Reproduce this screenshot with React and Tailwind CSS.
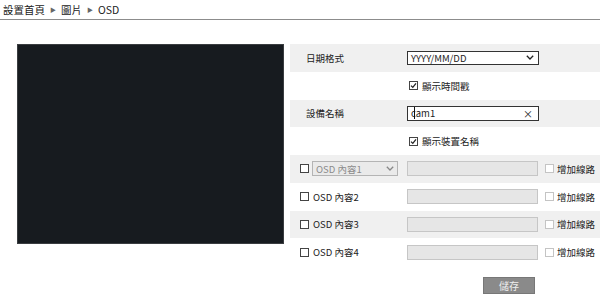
import React from "react";

const font = { fontFamily: '"Noto Sans CJK TC", "Noto Sans", sans-serif' };

const Box = ({ checked, muted }) => (
  <span
    className={`inline-flex items-center justify-center w-[9px] h-[9px] border bg-white shrink-0 ${
      muted ? "border-[#c4c4c4]" : "border-[#444]"
    }`}
  >
    {checked && (
      <svg width="7" height="7" viewBox="0 0 7 7">
        <path d="M1 3.6 L2.8 5.4 L6 1.4" fill="none" stroke="#222" strokeWidth="1.3" />
      </svg>
    )}
  </span>
);

const Chevron = ({ color }) => (
  <svg width="8" height="5" viewBox="0 0 8 5">
    <path d="M0.8 0.8 L4 4 L7.2 0.8" fill="none" stroke={color} strokeWidth="1.3" />
  </svg>
);

const Row = ({ gray, children }) => (
  <div className={`h-[27.75px] flex items-center text-[9.5px] text-[#222] ${gray ? "bg-[#f0f0f0]" : ""}`}>
    {children}
  </div>
);

const OsdRow = ({ gray, n, first }) => (
  <Row gray={gray}>
    <div className="w-[117px] pl-[10px] flex items-center">
      <Box />
      {first ? (
        <div className="ml-[3px] w-[86px] h-[15px] border border-[#b4b4b4] bg-[#eaeaea] flex items-center justify-between px-[3px] text-[#8a8a8a]">
          <span>OSD 內容1</span>
          <Chevron color="#888" />
        </div>
      ) : (
        <span className="ml-[4px]">OSD 內容{n}</span>
      )}
    </div>
    <div className="w-[131px] h-[15px] border border-[#c6c6c6] bg-[#e6e6e6]" />
    <div className="ml-[7px] flex items-center">
      <Box muted />
      <span className="ml-[3px]">增加線路</span>
    </div>
  </Row>
);

export default function App() {
  return (
    <div className="w-[600px] h-[308px] bg-white overflow-hidden" style={font}>
      <div className="h-[20px] border-b border-[#8c8c8c] pl-[3px] flex items-center text-[10.5px] text-[#222]">
        <span>設置首頁</span>
        <span className="mx-[5px] text-[6px] text-[#666]">▶</span>
        <span>圖片</span>
        <span className="mx-[5px] text-[6px] text-[#666]">▶</span>
        <span>OSD</span>
      </div>
      <div className="flex pt-[24px] pl-[17px]">
        <div className="w-[267px] h-[200px] bg-[#171b1f] border border-[#3a3d40] shrink-0" />
        <div className="ml-[6px] flex-1">
          <Row gray>
            <div className="w-[117px] pl-[16px]">日期格式</div>
            <div className="w-[132px] h-[14px] border border-[#333] bg-white flex items-center justify-between pl-[3px] pr-[4px]">
              <span>YYYY/MM/DD</span>
              <Chevron color="#222" />
            </div>
          </Row>
          <Row>
            <div className="w-[119px]" />
            <Box checked />
            <span className="ml-[4px]">顯示時間戳</span>
          </Row>
          <Row gray>
            <div className="w-[117px] pl-[16px]">設備名稱</div>
            <div className="w-[132px] h-[15px] border border-[#333] bg-white flex items-center justify-between pl-[3px] pr-[5px]">
              <span className="relative">
                cam1
                <span className="absolute left-[3px] top-[1px] w-px h-[12px] bg-[#111]" />
              </span>
              <span className="text-[10px]">×</span>
            </div>
          </Row>
          <Row>
            <div className="w-[119px]" />
            <Box checked />
            <span className="ml-[4px]">顯示裝置名稱</span>
          </Row>
          <OsdRow gray first />
          <OsdRow n={2} />
          <OsdRow gray n={3} />
          <OsdRow n={4} />
          <div className="pl-[193px] pt-[11px]">
            <button className="w-[52px] h-[17px] bg-[#8a8a8a] border border-[#777] text-[10px] text-[#eee] flex items-center justify-center">
              儲存
            </button>
          </div>
        </div>
      </div>
    </div>
  );
}
